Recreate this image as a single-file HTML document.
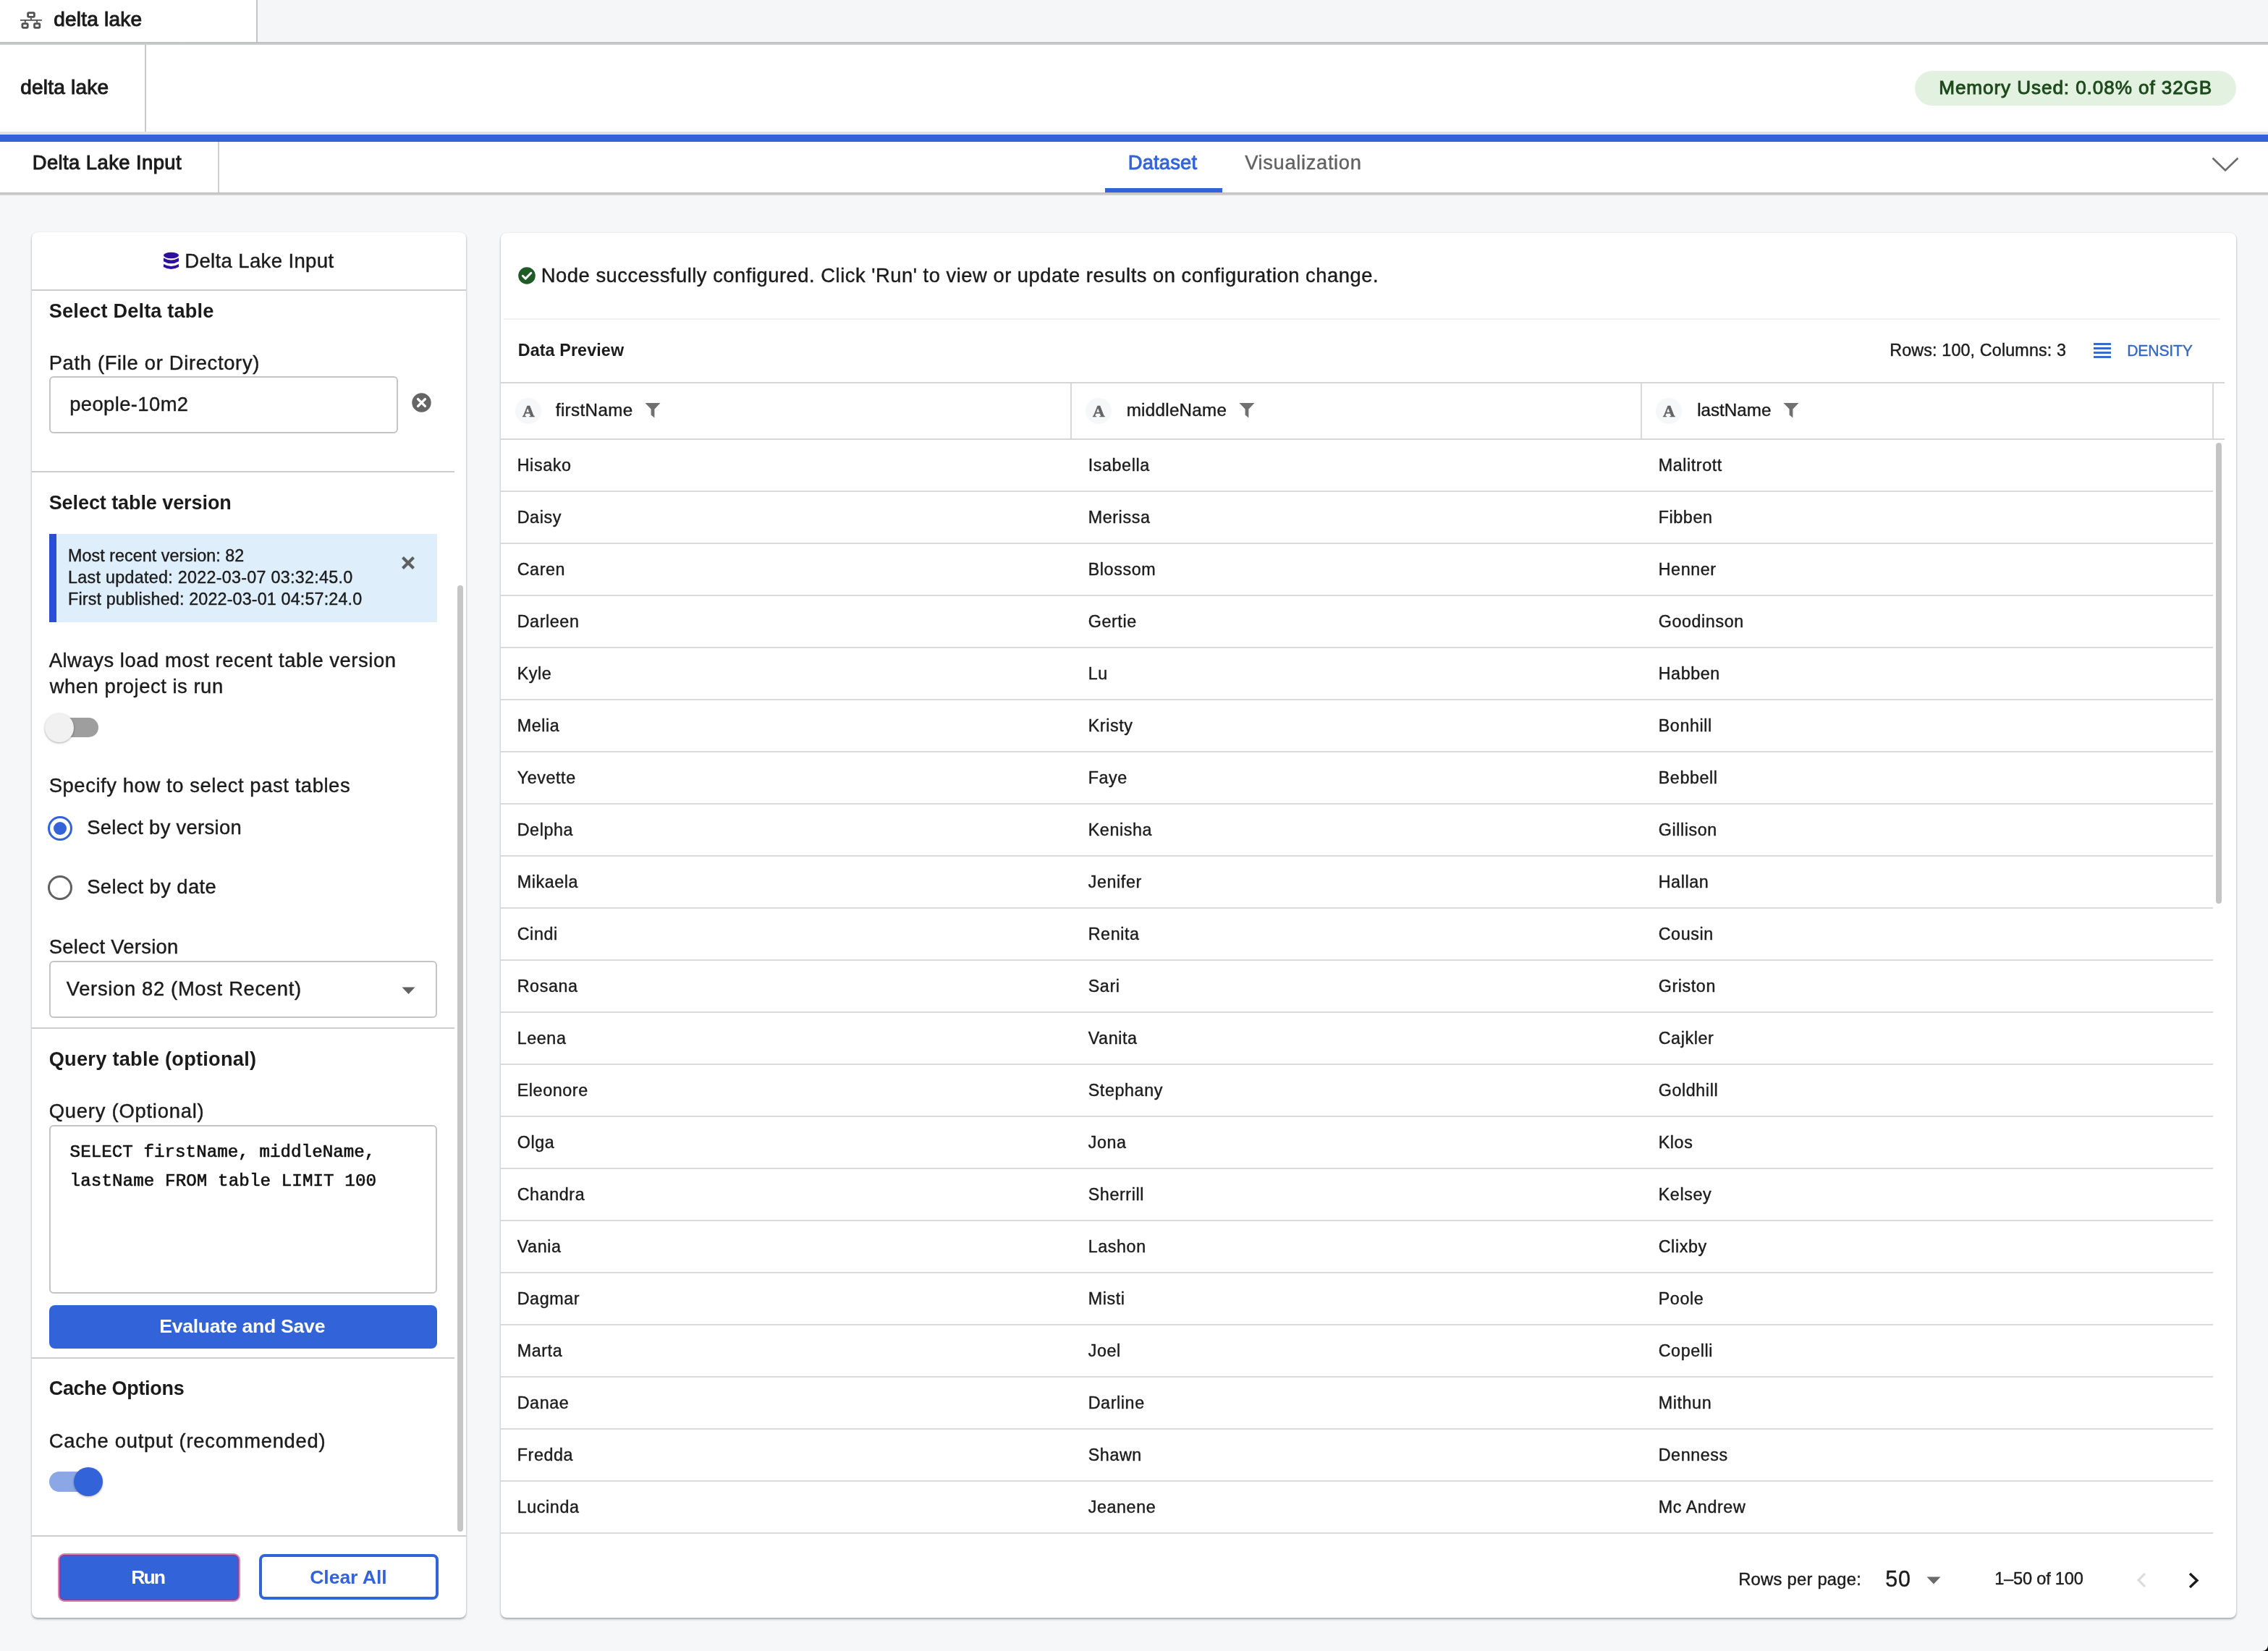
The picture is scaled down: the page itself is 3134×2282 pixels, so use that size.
<!DOCTYPE html>
<html><head><meta charset="utf-8"><title>delta lake</title>
<style>
html,body{margin:0;padding:0}
body{width:3134px;height:2282px;position:relative;overflow:hidden;background:#f6f7f9;font-family:"Liberation Sans",sans-serif}
.t{position:absolute;white-space:nowrap;line-height:1}
</style></head><body>
<div style="position:absolute;left:0;top:0;width:3134px;height:2282px;will-change:transform">
<div style="position:absolute;left:0px;top:0px;width:3134px;height:58px;background:#f5f6f8"></div>
<div style="position:absolute;left:0px;top:0px;width:354px;height:58px;background:#fff"></div>
<div style="position:absolute;left:354px;top:0px;width:2px;height:58px;background:#c4c5c7"></div>
<div style="position:absolute;left:0px;top:58px;width:3134px;height:4px;background:linear-gradient(#b9babc,#d2d3d5)"></div>
<svg style="position:absolute;left:28px;top:16px" width="30" height="24" viewBox="0 0 30 24" fill="none" stroke="#545454" stroke-width="2.8">
<rect x="10.6" y="1.6" width="8.8" height="5.7" rx="1.3"/>
<rect x="2.9" y="16.6" width="7.3" height="5.8" rx="1.3"/>
<rect x="19.5" y="16.6" width="7.3" height="5.8" rx="1.3"/>
<path d="M14.9 8.5V11.5M0 11.9H30M6.8 11.9V15.2M23.1 11.9V15.2" stroke-width="1.9"/>
</svg>
<div class="t" style="left:74.2px;top:13.3px;font-size:28px;font-family:'Liberation Sans', sans-serif;font-weight:normal;color:#1b1b1b;letter-spacing:0.22px;-webkit-text-stroke:1.0px #1b1b1b">delta lake</div>
<div style="position:absolute;left:0px;top:62px;width:3134px;height:120px;background:#fff"></div>
<div style="position:absolute;left:200px;top:62px;width:2px;height:120px;background:#c9c9c9"></div>
<div class="t" style="left:28.2px;top:106.8px;font-size:28px;font-family:'Liberation Sans', sans-serif;font-weight:normal;color:#1b1b1b;letter-spacing:0.22px;-webkit-text-stroke:1.0px #1b1b1b">delta lake</div>
<div style="position:absolute;left:2646px;top:98px;width:444px;height:48px;background:#e3f1e1;border-radius:24px"></div>
<div class="t" style="left:2679.2px;top:108.4px;font-size:26.2px;font-family:'Liberation Sans', sans-serif;font-weight:normal;color:#1d4a1c;letter-spacing:0.88px;-webkit-text-stroke:0.9px #1d4a1c">Memory Used: 0.08% of 32GB</div>
<div style="position:absolute;left:0px;top:182px;width:3134px;height:4px;background:#e2e2e2"></div>
<div style="position:absolute;left:0px;top:186px;width:3134px;height:10px;background:#3363d8"></div>
<div style="position:absolute;left:0px;top:196px;width:3134px;height:70px;background:#fff"></div>
<div style="position:absolute;left:301px;top:196px;width:2px;height:70px;background:#cfcfcf"></div>
<div class="t" style="left:44.7px;top:211.4px;font-size:27.4px;font-family:'Liberation Sans', sans-serif;font-weight:normal;color:#1b1b1b;letter-spacing:0.43px;-webkit-text-stroke:1.0px #1b1b1b">Delta Lake Input</div>
<div class="t" style="left:1558.8px;top:211.4px;font-size:27.4px;font-family:'Liberation Sans', sans-serif;font-weight:normal;color:#3363d8;letter-spacing:0.15px;-webkit-text-stroke:0.9px #3363d8">Dataset</div>
<div class="t" style="left:1720.2px;top:211.4px;font-size:27.4px;font-family:'Liberation Sans', sans-serif;font-weight:normal;color:#626262;letter-spacing:0.62px;-webkit-text-stroke:0.4px #626262">Visualization</div>
<div style="position:absolute;left:1527px;top:260px;width:162px;height:6px;background:#3363d8"></div>
<svg style="position:absolute;left:3056px;top:216px" width="38" height="22" viewBox="0 0 38 22"><path d="M1.5 2.5L19 19.5L36.5 2.5" fill="none" stroke="#6b6b6b" stroke-width="2.6"/></svg>
<div style="position:absolute;left:0px;top:266px;width:3134px;height:4px;background:linear-gradient(#bdbdbd,#d6d6d6)"></div>
<div style="position:absolute;left:0px;top:270px;width:3134px;height:2012px;background:#f6f7f9"></div>
<div style="position:absolute;left:44px;top:321px;width:600px;height:1915px;background:#fff;border-radius:8px;box-shadow:0 2px 3px rgba(0,0,0,0.32),0 0 2px rgba(0,0,0,0.10)"></div>
<svg style="position:absolute;left:225px;top:348px" width="23" height="26" viewBox="0 0 23 26">
<ellipse cx="11.5" cy="5" rx="10.5" ry="4.2" fill="#2e0fa0"/>
<path d="M1 8.6 Q11.5 14.5 22 8.6 V13.2 Q11.5 19.4 1 13.2Z" fill="#2e0fa0"/>
<path d="M1 17.1 Q11.5 23 22 17.1 V21 Q11.5 27 1 21Z" fill="#2e0fa0"/>
</svg>
<div class="t" style="left:255.2px;top:346.6px;font-size:27.6px;font-family:'Liberation Sans', sans-serif;font-weight:normal;color:#1b1b1b;letter-spacing:0.33px;-webkit-text-stroke:0.4px #1b1b1b;">Delta Lake Input</div>
<div style="position:absolute;left:44px;top:400px;width:600px;height:2px;background:#cbcbcb"></div>
<div class="t" style="left:67.7px;top:415.8px;font-size:27.2px;font-family:'Liberation Sans', sans-serif;font-weight:bold;color:#1b1b1b;letter-spacing:0.15px;">Select Delta table</div>
<div class="t" style="left:67.7px;top:487.5px;font-size:27.4px;font-family:'Liberation Sans', sans-serif;font-weight:normal;color:#1b1b1b;letter-spacing:0.66px;-webkit-text-stroke:0.4px #1b1b1b;">Path (File or Directory)</div>
<div style="position:absolute;left:68px;top:520px;width:482px;height:79px;background:#fff;border:2px solid #c4c4c4;border-radius:6px;box-sizing:border-box"></div>
<div class="t" style="left:96.2px;top:544.8px;font-size:27.4px;font-family:'Liberation Sans', sans-serif;font-weight:normal;color:#1b1b1b;letter-spacing:0.40px;-webkit-text-stroke:0.4px #1b1b1b;">people-10m2</div>
<svg style="position:absolute;left:569px;top:543px" width="27" height="27" viewBox="0 0 27 27">
<circle cx="13.5" cy="13.5" r="13.2" fill="#656565"/>
<path d="M8.6 8.6L18.4 18.4M18.4 8.6L8.6 18.4" stroke="#fff" stroke-width="3.4" stroke-linecap="round"/>
</svg>
<div style="position:absolute;left:44px;top:651px;width:584px;height:2px;background:#cdcdcd"></div>
<div class="t" style="left:67.7px;top:682.1px;font-size:27px;font-family:'Liberation Sans', sans-serif;font-weight:bold;color:#1b1b1b;letter-spacing:-0.08px;">Select table version</div>
<div style="position:absolute;left:68px;top:738px;width:536px;height:122px;background:#dfeefb"></div>
<div style="position:absolute;left:68px;top:738px;width:10px;height:122px;background:#2a4fd4"></div>
<div class="t" style="left:94.0px;top:756.8px;font-size:23.3px;font-family:'Liberation Sans', sans-serif;font-weight:normal;color:#1b1b1b;letter-spacing:0.05px;-webkit-text-stroke:0.4px #1b1b1b;">Most recent version: 82</div>
<div class="t" style="left:94.0px;top:786.5px;font-size:23.3px;font-family:'Liberation Sans', sans-serif;font-weight:normal;color:#1b1b1b;letter-spacing:0.29px;-webkit-text-stroke:0.4px #1b1b1b;">Last updated: 2022-03-07 03:32:45.0</div>
<div class="t" style="left:94.0px;top:817.0px;font-size:23.3px;font-family:'Liberation Sans', sans-serif;font-weight:normal;color:#1b1b1b;letter-spacing:0.16px;-webkit-text-stroke:0.4px #1b1b1b;">First published: 2022-03-01 04:57:24.0</div>
<svg style="position:absolute;left:554px;top:768px" width="20" height="20" viewBox="0 0 20 20">
<path d="M2.5 2.5L17.5 17.5M17.5 2.5L2.5 17.5" stroke="#5f5f5f" stroke-width="4.2"/>
</svg>
<div class="t" style="left:67.7px;top:899.3px;font-size:27.4px;font-family:'Liberation Sans', sans-serif;font-weight:normal;color:#1b1b1b;letter-spacing:0.54px;-webkit-text-stroke:0.4px #1b1b1b;">Always load most recent table version</div>
<div class="t" style="left:68.7px;top:935.4px;font-size:27.4px;font-family:'Liberation Sans', sans-serif;font-weight:normal;color:#1b1b1b;letter-spacing:0.53px;-webkit-text-stroke:0.4px #1b1b1b;">when project is run</div>
<div style="position:absolute;left:65px;top:992px;width:71px;height:27px;background:#9e9e9e;border-radius:14px"></div>
<div style="position:absolute;left:62px;top:986px;width:40px;height:40px;background:#f1f1f1;border-radius:50%;box-shadow:0 1px 3px rgba(0,0,0,0.35)"></div>
<div class="t" style="left:67.7px;top:1071.6px;font-size:27.4px;font-family:'Liberation Sans', sans-serif;font-weight:normal;color:#1b1b1b;letter-spacing:0.58px;-webkit-text-stroke:0.4px #1b1b1b;">Specify how to select past tables</div>
<div style="position:absolute;left:66px;top:1128px;width:34px;height:34px;border:3.8px solid #3363d8;border-radius:50%;box-sizing:border-box"></div>
<div style="position:absolute;left:74px;top:1136px;width:18px;height:18px;background:#3363d8;border-radius:50%"></div>
<div class="t" style="left:120.2px;top:1130.2px;font-size:27.4px;font-family:'Liberation Sans', sans-serif;font-weight:normal;color:#1b1b1b;letter-spacing:0.31px;-webkit-text-stroke:0.4px #1b1b1b;">Select by version</div>
<div style="position:absolute;left:66px;top:1210px;width:34px;height:34px;border:3.7px solid #616161;border-radius:50%;box-sizing:border-box"></div>
<div class="t" style="left:120.2px;top:1212.3px;font-size:27.4px;font-family:'Liberation Sans', sans-serif;font-weight:normal;color:#1b1b1b;letter-spacing:0.38px;-webkit-text-stroke:0.4px #1b1b1b;">Select by date</div>
<div class="t" style="left:67.7px;top:1295.3px;font-size:27.4px;font-family:'Liberation Sans', sans-serif;font-weight:normal;color:#1b1b1b;letter-spacing:0.27px;-webkit-text-stroke:0.4px #1b1b1b;">Select Version</div>
<div style="position:absolute;left:68px;top:1328px;width:536px;height:79px;background:#fff;border:2px solid #c4c4c4;border-radius:6px;box-sizing:border-box"></div>
<div class="t" style="left:91.8px;top:1352.8px;font-size:27.4px;font-family:'Liberation Sans', sans-serif;font-weight:normal;color:#1b1b1b;letter-spacing:0.66px;-webkit-text-stroke:0.4px #1b1b1b;">Version 82 (Most Recent)</div>
<svg style="position:absolute;left:555px;top:1364px" width="19" height="11" viewBox="0 0 19 11"><path d="M0.5 0.5H18.5L9.5 10Z" fill="#616161"/></svg>
<div style="position:absolute;left:44px;top:1420px;width:584px;height:2px;background:#cdcdcd"></div>
<div class="t" style="left:67.7px;top:1450.0px;font-size:27.2px;font-family:'Liberation Sans', sans-serif;font-weight:bold;color:#1b1b1b;letter-spacing:0.26px;">Query table (optional)</div>
<div class="t" style="left:67.7px;top:1521.8px;font-size:27.4px;font-family:'Liberation Sans', sans-serif;font-weight:normal;color:#1b1b1b;letter-spacing:0.77px;-webkit-text-stroke:0.4px #1b1b1b;">Query (Optional)</div>
<div style="position:absolute;left:68px;top:1555px;width:536px;height:233px;background:#fff;border:2px solid #c4c4c4;border-radius:6px;box-sizing:border-box"></div>
<div class="t" style="left:96.6px;top:1581.1px;font-size:24.2px;font-family:'Liberation Mono', monospace;font-weight:normal;color:#111;letter-spacing:0.03px;-webkit-text-stroke:0.6px #111">SELECT firstName, middleName,</div>
<div class="t" style="left:96.6px;top:1621.2px;font-size:24.2px;font-family:'Liberation Mono', monospace;font-weight:normal;color:#111;letter-spacing:0.09px;-webkit-text-stroke:0.6px #111">lastName FROM table LIMIT 100</div>
<div style="position:absolute;left:68px;top:1804px;width:536px;height:60px;background:#3363d8;border-radius:8px"></div>
<div class="t" style="left:220.2px;top:1820.1px;font-size:26.6px;font-family:'Liberation Sans', sans-serif;font-weight:bold;color:#fff;letter-spacing:-0.27px;">Evaluate and Save</div>
<div style="position:absolute;left:44px;top:1876px;width:584px;height:2px;background:#cdcdcd"></div>
<div class="t" style="left:67.7px;top:1905.9px;font-size:27px;font-family:'Liberation Sans', sans-serif;font-weight:bold;color:#1b1b1b;letter-spacing:-0.29px;">Cache Options</div>
<div class="t" style="left:67.7px;top:1977.5px;font-size:27.4px;font-family:'Liberation Sans', sans-serif;font-weight:normal;color:#1b1b1b;letter-spacing:0.72px;-webkit-text-stroke:0.4px #1b1b1b;">Cache output (recommended)</div>
<div style="position:absolute;left:68px;top:2034px;width:56px;height:28px;background:#8ca7e6;border-radius:14px"></div>
<div style="position:absolute;left:102px;top:2028px;width:40px;height:40px;background:#3363d8;border-radius:50%;box-shadow:0 1px 3px rgba(0,0,0,0.3)"></div>
<div style="position:absolute;left:632px;top:809px;width:8px;height:1308px;background:#c6c6c6;border-radius:4px"></div>
<div style="position:absolute;left:44px;top:2122px;width:600px;height:2px;background:#cdcdcd"></div>
<div style="position:absolute;left:80px;top:2147px;width:252px;height:67px;background:#3363d8;border:2.5px solid #df80b3;box-shadow:inset 0 0 0 1.5px #8d3c98;border-radius:9px;box-sizing:border-box"></div>
<div class="t" style="left:181.2px;top:2166.5px;font-size:26.6px;font-family:'Liberation Sans', sans-serif;font-weight:bold;color:#fff;letter-spacing:-2.00px;">Run</div>
<div style="position:absolute;left:358px;top:2148px;width:248px;height:63px;background:#fff;border:4px solid #3363d8;border-radius:8px;box-sizing:border-box"></div>
<div class="t" style="left:428.2px;top:2166.5px;font-size:26.6px;font-family:'Liberation Sans', sans-serif;font-weight:bold;color:#3363d8;letter-spacing:-0.06px;">Clear All</div>
<div style="position:absolute;left:692px;top:322px;width:2398px;height:1914px;background:#fff;border-radius:8px;box-shadow:0 2px 3px rgba(0,0,0,0.32),0 0 2px rgba(0,0,0,0.10)"></div>
<svg style="position:absolute;left:716px;top:369px" width="24" height="24" viewBox="0 0 24 24">
<circle cx="12" cy="12" r="11.8" fill="#1f5a27"/>
<path d="M6.3 12.3L10.2 16.1L17.8 8.3" fill="none" stroke="#fff" stroke-width="3" stroke-linecap="round" stroke-linejoin="round"/>
</svg>
<div class="t" style="left:747.8px;top:367.2px;font-size:27.4px;font-family:'Liberation Sans', sans-serif;font-weight:normal;color:#1b1b1b;letter-spacing:0.50px;-webkit-text-stroke:0.4px #1b1b1b;">Node successfully configured. Click 'Run' to view or update results on configuration change.</div>
<div style="position:absolute;left:696px;top:440px;width:2372px;height:2px;background:#f2f2f2"></div>
<div class="t" style="left:715.7px;top:472.6px;font-size:23.3px;font-family:'Liberation Sans', sans-serif;font-weight:bold;color:#1b1b1b;letter-spacing:0.12px;">Data Preview</div>
<div class="t" style="left:2611.2px;top:472.9px;font-size:23.3px;font-family:'Liberation Sans', sans-serif;font-weight:normal;color:#1b1b1b;letter-spacing:0.15px;-webkit-text-stroke:0.4px #1b1b1b;">Rows: 100, Columns: 3</div>
<div style="position:absolute;left:2893px;top:474px;width:24px;height:3.2px;background:#3a6bc9"></div>
<div style="position:absolute;left:2893px;top:480px;width:24px;height:3.2px;background:#3a6bc9"></div>
<div style="position:absolute;left:2893px;top:486px;width:24px;height:3.2px;background:#3a6bc9"></div>
<div style="position:absolute;left:2893px;top:492px;width:24px;height:3.2px;background:#3a6bc9"></div>
<div class="t" style="left:2939.2px;top:474.0px;font-size:21.2px;font-family:'Liberation Sans', sans-serif;font-weight:normal;color:#3568c5;letter-spacing:-0.17px;-webkit-text-stroke:0.4px #3568c5;">DENSITY</div>
<div style="position:absolute;left:692px;top:528px;width:2382px;height:2px;background:#d6d6d6"></div>
<div style="position:absolute;left:692px;top:606px;width:2382px;height:2px;background:#d6d6d6"></div>
<div style="position:absolute;left:1479px;top:530px;width:2px;height:76px;background:#d9d9d9"></div>
<div style="position:absolute;left:2267px;top:530px;width:2px;height:76px;background:#d9d9d9"></div>
<div style="position:absolute;left:3057px;top:530px;width:2px;height:76px;background:#d9d9d9"></div>
<div style="position:absolute;left:712px;top:550px;width:36px;height:36px;background:#f6f7f8;border-radius:50%"></div>
<div class="t" style="left:722.0px;top:556.6px;font-size:23px;font-family:'Liberation Serif', serif;font-weight:bold;color:#646464;-webkit-text-stroke:0.6px #646464">A</div>
<div class="t" style="left:767.8px;top:554.8px;font-size:24.2px;font-family:'Liberation Sans', sans-serif;font-weight:normal;color:#1b1b1b;letter-spacing:0.36px;-webkit-text-stroke:0.4px #1b1b1b;">firstName</div>
<svg style="position:absolute;left:890.7px;top:556px" width="22" height="22" viewBox="0 0 22 22"><path d="M0.5 1H21.5L13.4 9.6V21.5L8.6 17.5V9.6Z" fill="#707070"/></svg>
<div style="position:absolute;left:1500px;top:550px;width:36px;height:36px;background:#f6f7f8;border-radius:50%"></div>
<div class="t" style="left:1510.0px;top:556.6px;font-size:23px;font-family:'Liberation Serif', serif;font-weight:bold;color:#646464;-webkit-text-stroke:0.6px #646464">A</div>
<div class="t" style="left:1556.7px;top:554.8px;font-size:24.2px;font-family:'Liberation Sans', sans-serif;font-weight:normal;color:#1b1b1b;letter-spacing:0.28px;-webkit-text-stroke:0.4px #1b1b1b;">middleName</div>
<svg style="position:absolute;left:1712px;top:556px" width="22" height="22" viewBox="0 0 22 22"><path d="M0.5 1H21.5L13.4 9.6V21.5L8.6 17.5V9.6Z" fill="#707070"/></svg>
<div style="position:absolute;left:2288px;top:550px;width:36px;height:36px;background:#f6f7f8;border-radius:50%"></div>
<div class="t" style="left:2298.0px;top:556.6px;font-size:23px;font-family:'Liberation Serif', serif;font-weight:bold;color:#646464;-webkit-text-stroke:0.6px #646464">A</div>
<div class="t" style="left:2345.2px;top:554.8px;font-size:24.2px;font-family:'Liberation Sans', sans-serif;font-weight:normal;color:#1b1b1b;-webkit-text-stroke:0.4px #1b1b1b;">lastName</div>
<svg style="position:absolute;left:2463.7px;top:556px" width="22" height="22" viewBox="0 0 22 22"><path d="M0.5 1H21.5L13.4 9.6V21.5L8.6 17.5V9.6Z" fill="#707070"/></svg>
<div class="t" style="left:714.7px;top:631.7px;font-size:23.3px;font-family:'Liberation Sans', sans-serif;font-weight:normal;color:#1b1b1b;letter-spacing:0.60px;-webkit-text-stroke:0.4px #1b1b1b;">Hisako</div>
<div class="t" style="left:1503.7px;top:631.7px;font-size:23.3px;font-family:'Liberation Sans', sans-serif;font-weight:normal;color:#1b1b1b;letter-spacing:0.60px;-webkit-text-stroke:0.4px #1b1b1b;">Isabella</div>
<div class="t" style="left:2291.7px;top:631.7px;font-size:23.3px;font-family:'Liberation Sans', sans-serif;font-weight:normal;color:#1b1b1b;letter-spacing:0.60px;-webkit-text-stroke:0.4px #1b1b1b;">Malitrott</div>
<div style="position:absolute;left:692px;top:678px;width:2366px;height:2px;background:#dadada"></div>
<div class="t" style="left:714.7px;top:703.7px;font-size:23.3px;font-family:'Liberation Sans', sans-serif;font-weight:normal;color:#1b1b1b;letter-spacing:0.60px;-webkit-text-stroke:0.4px #1b1b1b;">Daisy</div>
<div class="t" style="left:1503.7px;top:703.7px;font-size:23.3px;font-family:'Liberation Sans', sans-serif;font-weight:normal;color:#1b1b1b;letter-spacing:0.60px;-webkit-text-stroke:0.4px #1b1b1b;">Merissa</div>
<div class="t" style="left:2291.7px;top:703.7px;font-size:23.3px;font-family:'Liberation Sans', sans-serif;font-weight:normal;color:#1b1b1b;letter-spacing:0.60px;-webkit-text-stroke:0.4px #1b1b1b;">Fibben</div>
<div style="position:absolute;left:692px;top:750px;width:2366px;height:2px;background:#dadada"></div>
<div class="t" style="left:714.7px;top:775.7px;font-size:23.3px;font-family:'Liberation Sans', sans-serif;font-weight:normal;color:#1b1b1b;letter-spacing:0.60px;-webkit-text-stroke:0.4px #1b1b1b;">Caren</div>
<div class="t" style="left:1503.7px;top:775.7px;font-size:23.3px;font-family:'Liberation Sans', sans-serif;font-weight:normal;color:#1b1b1b;letter-spacing:0.60px;-webkit-text-stroke:0.4px #1b1b1b;">Blossom</div>
<div class="t" style="left:2291.7px;top:775.7px;font-size:23.3px;font-family:'Liberation Sans', sans-serif;font-weight:normal;color:#1b1b1b;letter-spacing:0.60px;-webkit-text-stroke:0.4px #1b1b1b;">Henner</div>
<div style="position:absolute;left:692px;top:822px;width:2366px;height:2px;background:#dadada"></div>
<div class="t" style="left:714.7px;top:847.7px;font-size:23.3px;font-family:'Liberation Sans', sans-serif;font-weight:normal;color:#1b1b1b;letter-spacing:0.60px;-webkit-text-stroke:0.4px #1b1b1b;">Darleen</div>
<div class="t" style="left:1503.7px;top:847.7px;font-size:23.3px;font-family:'Liberation Sans', sans-serif;font-weight:normal;color:#1b1b1b;letter-spacing:0.60px;-webkit-text-stroke:0.4px #1b1b1b;">Gertie</div>
<div class="t" style="left:2291.7px;top:847.7px;font-size:23.3px;font-family:'Liberation Sans', sans-serif;font-weight:normal;color:#1b1b1b;letter-spacing:0.60px;-webkit-text-stroke:0.4px #1b1b1b;">Goodinson</div>
<div style="position:absolute;left:692px;top:894px;width:2366px;height:2px;background:#dadada"></div>
<div class="t" style="left:714.7px;top:919.7px;font-size:23.3px;font-family:'Liberation Sans', sans-serif;font-weight:normal;color:#1b1b1b;letter-spacing:0.60px;-webkit-text-stroke:0.4px #1b1b1b;">Kyle</div>
<div class="t" style="left:1503.7px;top:919.7px;font-size:23.3px;font-family:'Liberation Sans', sans-serif;font-weight:normal;color:#1b1b1b;letter-spacing:0.60px;-webkit-text-stroke:0.4px #1b1b1b;">Lu</div>
<div class="t" style="left:2291.7px;top:919.7px;font-size:23.3px;font-family:'Liberation Sans', sans-serif;font-weight:normal;color:#1b1b1b;letter-spacing:0.60px;-webkit-text-stroke:0.4px #1b1b1b;">Habben</div>
<div style="position:absolute;left:692px;top:966px;width:2366px;height:2px;background:#dadada"></div>
<div class="t" style="left:714.7px;top:991.7px;font-size:23.3px;font-family:'Liberation Sans', sans-serif;font-weight:normal;color:#1b1b1b;letter-spacing:0.60px;-webkit-text-stroke:0.4px #1b1b1b;">Melia</div>
<div class="t" style="left:1503.7px;top:991.7px;font-size:23.3px;font-family:'Liberation Sans', sans-serif;font-weight:normal;color:#1b1b1b;letter-spacing:0.60px;-webkit-text-stroke:0.4px #1b1b1b;">Kristy</div>
<div class="t" style="left:2291.7px;top:991.7px;font-size:23.3px;font-family:'Liberation Sans', sans-serif;font-weight:normal;color:#1b1b1b;letter-spacing:0.60px;-webkit-text-stroke:0.4px #1b1b1b;">Bonhill</div>
<div style="position:absolute;left:692px;top:1038px;width:2366px;height:2px;background:#dadada"></div>
<div class="t" style="left:714.7px;top:1063.7px;font-size:23.3px;font-family:'Liberation Sans', sans-serif;font-weight:normal;color:#1b1b1b;letter-spacing:0.60px;-webkit-text-stroke:0.4px #1b1b1b;">Yevette</div>
<div class="t" style="left:1503.7px;top:1063.7px;font-size:23.3px;font-family:'Liberation Sans', sans-serif;font-weight:normal;color:#1b1b1b;letter-spacing:0.60px;-webkit-text-stroke:0.4px #1b1b1b;">Faye</div>
<div class="t" style="left:2291.7px;top:1063.7px;font-size:23.3px;font-family:'Liberation Sans', sans-serif;font-weight:normal;color:#1b1b1b;letter-spacing:0.60px;-webkit-text-stroke:0.4px #1b1b1b;">Bebbell</div>
<div style="position:absolute;left:692px;top:1110px;width:2366px;height:2px;background:#dadada"></div>
<div class="t" style="left:714.7px;top:1135.7px;font-size:23.3px;font-family:'Liberation Sans', sans-serif;font-weight:normal;color:#1b1b1b;letter-spacing:0.60px;-webkit-text-stroke:0.4px #1b1b1b;">Delpha</div>
<div class="t" style="left:1503.7px;top:1135.7px;font-size:23.3px;font-family:'Liberation Sans', sans-serif;font-weight:normal;color:#1b1b1b;letter-spacing:0.60px;-webkit-text-stroke:0.4px #1b1b1b;">Kenisha</div>
<div class="t" style="left:2291.7px;top:1135.7px;font-size:23.3px;font-family:'Liberation Sans', sans-serif;font-weight:normal;color:#1b1b1b;letter-spacing:0.60px;-webkit-text-stroke:0.4px #1b1b1b;">Gillison</div>
<div style="position:absolute;left:692px;top:1182px;width:2366px;height:2px;background:#dadada"></div>
<div class="t" style="left:714.7px;top:1207.7px;font-size:23.3px;font-family:'Liberation Sans', sans-serif;font-weight:normal;color:#1b1b1b;letter-spacing:0.60px;-webkit-text-stroke:0.4px #1b1b1b;">Mikaela</div>
<div class="t" style="left:1503.7px;top:1207.7px;font-size:23.3px;font-family:'Liberation Sans', sans-serif;font-weight:normal;color:#1b1b1b;letter-spacing:0.60px;-webkit-text-stroke:0.4px #1b1b1b;">Jenifer</div>
<div class="t" style="left:2291.7px;top:1207.7px;font-size:23.3px;font-family:'Liberation Sans', sans-serif;font-weight:normal;color:#1b1b1b;letter-spacing:0.60px;-webkit-text-stroke:0.4px #1b1b1b;">Hallan</div>
<div style="position:absolute;left:692px;top:1254px;width:2366px;height:2px;background:#dadada"></div>
<div class="t" style="left:714.7px;top:1279.7px;font-size:23.3px;font-family:'Liberation Sans', sans-serif;font-weight:normal;color:#1b1b1b;letter-spacing:0.60px;-webkit-text-stroke:0.4px #1b1b1b;">Cindi</div>
<div class="t" style="left:1503.7px;top:1279.7px;font-size:23.3px;font-family:'Liberation Sans', sans-serif;font-weight:normal;color:#1b1b1b;letter-spacing:0.60px;-webkit-text-stroke:0.4px #1b1b1b;">Renita</div>
<div class="t" style="left:2291.7px;top:1279.7px;font-size:23.3px;font-family:'Liberation Sans', sans-serif;font-weight:normal;color:#1b1b1b;letter-spacing:0.60px;-webkit-text-stroke:0.4px #1b1b1b;">Cousin</div>
<div style="position:absolute;left:692px;top:1326px;width:2366px;height:2px;background:#dadada"></div>
<div class="t" style="left:714.7px;top:1351.7px;font-size:23.3px;font-family:'Liberation Sans', sans-serif;font-weight:normal;color:#1b1b1b;letter-spacing:0.60px;-webkit-text-stroke:0.4px #1b1b1b;">Rosana</div>
<div class="t" style="left:1503.7px;top:1351.7px;font-size:23.3px;font-family:'Liberation Sans', sans-serif;font-weight:normal;color:#1b1b1b;letter-spacing:0.60px;-webkit-text-stroke:0.4px #1b1b1b;">Sari</div>
<div class="t" style="left:2291.7px;top:1351.7px;font-size:23.3px;font-family:'Liberation Sans', sans-serif;font-weight:normal;color:#1b1b1b;letter-spacing:0.60px;-webkit-text-stroke:0.4px #1b1b1b;">Griston</div>
<div style="position:absolute;left:692px;top:1398px;width:2366px;height:2px;background:#dadada"></div>
<div class="t" style="left:714.7px;top:1423.7px;font-size:23.3px;font-family:'Liberation Sans', sans-serif;font-weight:normal;color:#1b1b1b;letter-spacing:0.60px;-webkit-text-stroke:0.4px #1b1b1b;">Leena</div>
<div class="t" style="left:1503.7px;top:1423.7px;font-size:23.3px;font-family:'Liberation Sans', sans-serif;font-weight:normal;color:#1b1b1b;letter-spacing:0.60px;-webkit-text-stroke:0.4px #1b1b1b;">Vanita</div>
<div class="t" style="left:2291.7px;top:1423.7px;font-size:23.3px;font-family:'Liberation Sans', sans-serif;font-weight:normal;color:#1b1b1b;letter-spacing:0.60px;-webkit-text-stroke:0.4px #1b1b1b;">Cajkler</div>
<div style="position:absolute;left:692px;top:1470px;width:2366px;height:2px;background:#dadada"></div>
<div class="t" style="left:714.7px;top:1495.7px;font-size:23.3px;font-family:'Liberation Sans', sans-serif;font-weight:normal;color:#1b1b1b;letter-spacing:0.60px;-webkit-text-stroke:0.4px #1b1b1b;">Eleonore</div>
<div class="t" style="left:1503.7px;top:1495.7px;font-size:23.3px;font-family:'Liberation Sans', sans-serif;font-weight:normal;color:#1b1b1b;letter-spacing:0.60px;-webkit-text-stroke:0.4px #1b1b1b;">Stephany</div>
<div class="t" style="left:2291.7px;top:1495.7px;font-size:23.3px;font-family:'Liberation Sans', sans-serif;font-weight:normal;color:#1b1b1b;letter-spacing:0.60px;-webkit-text-stroke:0.4px #1b1b1b;">Goldhill</div>
<div style="position:absolute;left:692px;top:1542px;width:2366px;height:2px;background:#dadada"></div>
<div class="t" style="left:714.7px;top:1567.7px;font-size:23.3px;font-family:'Liberation Sans', sans-serif;font-weight:normal;color:#1b1b1b;letter-spacing:0.60px;-webkit-text-stroke:0.4px #1b1b1b;">Olga</div>
<div class="t" style="left:1503.7px;top:1567.7px;font-size:23.3px;font-family:'Liberation Sans', sans-serif;font-weight:normal;color:#1b1b1b;letter-spacing:0.60px;-webkit-text-stroke:0.4px #1b1b1b;">Jona</div>
<div class="t" style="left:2291.7px;top:1567.7px;font-size:23.3px;font-family:'Liberation Sans', sans-serif;font-weight:normal;color:#1b1b1b;letter-spacing:0.60px;-webkit-text-stroke:0.4px #1b1b1b;">Klos</div>
<div style="position:absolute;left:692px;top:1614px;width:2366px;height:2px;background:#dadada"></div>
<div class="t" style="left:714.7px;top:1639.7px;font-size:23.3px;font-family:'Liberation Sans', sans-serif;font-weight:normal;color:#1b1b1b;letter-spacing:0.60px;-webkit-text-stroke:0.4px #1b1b1b;">Chandra</div>
<div class="t" style="left:1503.7px;top:1639.7px;font-size:23.3px;font-family:'Liberation Sans', sans-serif;font-weight:normal;color:#1b1b1b;letter-spacing:0.60px;-webkit-text-stroke:0.4px #1b1b1b;">Sherrill</div>
<div class="t" style="left:2291.7px;top:1639.7px;font-size:23.3px;font-family:'Liberation Sans', sans-serif;font-weight:normal;color:#1b1b1b;letter-spacing:0.60px;-webkit-text-stroke:0.4px #1b1b1b;">Kelsey</div>
<div style="position:absolute;left:692px;top:1686px;width:2366px;height:2px;background:#dadada"></div>
<div class="t" style="left:714.7px;top:1711.7px;font-size:23.3px;font-family:'Liberation Sans', sans-serif;font-weight:normal;color:#1b1b1b;letter-spacing:0.60px;-webkit-text-stroke:0.4px #1b1b1b;">Vania</div>
<div class="t" style="left:1503.7px;top:1711.7px;font-size:23.3px;font-family:'Liberation Sans', sans-serif;font-weight:normal;color:#1b1b1b;letter-spacing:0.60px;-webkit-text-stroke:0.4px #1b1b1b;">Lashon</div>
<div class="t" style="left:2291.7px;top:1711.7px;font-size:23.3px;font-family:'Liberation Sans', sans-serif;font-weight:normal;color:#1b1b1b;letter-spacing:0.60px;-webkit-text-stroke:0.4px #1b1b1b;">Clixby</div>
<div style="position:absolute;left:692px;top:1758px;width:2366px;height:2px;background:#dadada"></div>
<div class="t" style="left:714.7px;top:1783.7px;font-size:23.3px;font-family:'Liberation Sans', sans-serif;font-weight:normal;color:#1b1b1b;letter-spacing:0.60px;-webkit-text-stroke:0.4px #1b1b1b;">Dagmar</div>
<div class="t" style="left:1503.7px;top:1783.7px;font-size:23.3px;font-family:'Liberation Sans', sans-serif;font-weight:normal;color:#1b1b1b;letter-spacing:0.60px;-webkit-text-stroke:0.4px #1b1b1b;">Misti</div>
<div class="t" style="left:2291.7px;top:1783.7px;font-size:23.3px;font-family:'Liberation Sans', sans-serif;font-weight:normal;color:#1b1b1b;letter-spacing:0.60px;-webkit-text-stroke:0.4px #1b1b1b;">Poole</div>
<div style="position:absolute;left:692px;top:1830px;width:2366px;height:2px;background:#dadada"></div>
<div class="t" style="left:714.7px;top:1855.7px;font-size:23.3px;font-family:'Liberation Sans', sans-serif;font-weight:normal;color:#1b1b1b;letter-spacing:0.60px;-webkit-text-stroke:0.4px #1b1b1b;">Marta</div>
<div class="t" style="left:1503.7px;top:1855.7px;font-size:23.3px;font-family:'Liberation Sans', sans-serif;font-weight:normal;color:#1b1b1b;letter-spacing:0.60px;-webkit-text-stroke:0.4px #1b1b1b;">Joel</div>
<div class="t" style="left:2291.7px;top:1855.7px;font-size:23.3px;font-family:'Liberation Sans', sans-serif;font-weight:normal;color:#1b1b1b;letter-spacing:0.60px;-webkit-text-stroke:0.4px #1b1b1b;">Copelli</div>
<div style="position:absolute;left:692px;top:1902px;width:2366px;height:2px;background:#dadada"></div>
<div class="t" style="left:714.7px;top:1927.7px;font-size:23.3px;font-family:'Liberation Sans', sans-serif;font-weight:normal;color:#1b1b1b;letter-spacing:0.60px;-webkit-text-stroke:0.4px #1b1b1b;">Danae</div>
<div class="t" style="left:1503.7px;top:1927.7px;font-size:23.3px;font-family:'Liberation Sans', sans-serif;font-weight:normal;color:#1b1b1b;letter-spacing:0.60px;-webkit-text-stroke:0.4px #1b1b1b;">Darline</div>
<div class="t" style="left:2291.7px;top:1927.7px;font-size:23.3px;font-family:'Liberation Sans', sans-serif;font-weight:normal;color:#1b1b1b;letter-spacing:0.60px;-webkit-text-stroke:0.4px #1b1b1b;">Mithun</div>
<div style="position:absolute;left:692px;top:1974px;width:2366px;height:2px;background:#dadada"></div>
<div class="t" style="left:714.7px;top:1999.7px;font-size:23.3px;font-family:'Liberation Sans', sans-serif;font-weight:normal;color:#1b1b1b;letter-spacing:0.60px;-webkit-text-stroke:0.4px #1b1b1b;">Fredda</div>
<div class="t" style="left:1503.7px;top:1999.7px;font-size:23.3px;font-family:'Liberation Sans', sans-serif;font-weight:normal;color:#1b1b1b;letter-spacing:0.60px;-webkit-text-stroke:0.4px #1b1b1b;">Shawn</div>
<div class="t" style="left:2291.7px;top:1999.7px;font-size:23.3px;font-family:'Liberation Sans', sans-serif;font-weight:normal;color:#1b1b1b;letter-spacing:0.60px;-webkit-text-stroke:0.4px #1b1b1b;">Denness</div>
<div style="position:absolute;left:692px;top:2046px;width:2366px;height:2px;background:#dadada"></div>
<div class="t" style="left:714.7px;top:2071.7px;font-size:23.3px;font-family:'Liberation Sans', sans-serif;font-weight:normal;color:#1b1b1b;letter-spacing:0.60px;-webkit-text-stroke:0.4px #1b1b1b;">Lucinda</div>
<div class="t" style="left:1503.7px;top:2071.7px;font-size:23.3px;font-family:'Liberation Sans', sans-serif;font-weight:normal;color:#1b1b1b;letter-spacing:0.60px;-webkit-text-stroke:0.4px #1b1b1b;">Jeanene</div>
<div class="t" style="left:2291.7px;top:2071.7px;font-size:23.3px;font-family:'Liberation Sans', sans-serif;font-weight:normal;color:#1b1b1b;letter-spacing:0.60px;-webkit-text-stroke:0.4px #1b1b1b;">Mc Andrew</div>
<div style="position:absolute;left:692px;top:2118px;width:2366px;height:2px;background:#dadada"></div>
<div style="position:absolute;left:3062px;top:612px;width:8px;height:637px;background:#c4c4c4;border-radius:4px"></div>
<div class="t" style="left:2402.2px;top:2171.2px;font-size:23.8px;font-family:'Liberation Sans', sans-serif;font-weight:normal;color:#1b1b1b;letter-spacing:0.23px;-webkit-text-stroke:0.4px #1b1b1b;">Rows per page:</div>
<div class="t" style="left:2605.2px;top:2167.2px;font-size:30.5px;font-family:'Liberation Sans', sans-serif;font-weight:normal;color:#1b1b1b;letter-spacing:0.80px;-webkit-text-stroke:0.4px #1b1b1b;">50</div>
<svg style="position:absolute;left:2662px;top:2179px" width="20" height="11" viewBox="0 0 20 11"><path d="M0.5 0.5H19.5L10 10.5Z" fill="#6b6b6b"/></svg>
<div class="t" style="left:2756.2px;top:2171.4px;font-size:23.6px;font-family:'Liberation Sans', sans-serif;font-weight:normal;color:#1b1b1b;letter-spacing:-0.20px;-webkit-text-stroke:0.4px #1b1b1b;">1–50 of 100</div>
<svg style="position:absolute;left:2950px;top:2173px" width="18" height="22" viewBox="0 0 18 22"><path d="M14 2L5 11L14 20" fill="none" stroke="#dadada" stroke-width="3"/></svg>
<svg style="position:absolute;left:3022px;top:2173px" width="20" height="22" viewBox="0 0 20 22"><path d="M4 2L14 11.5L4 21" fill="none" stroke="#1b1b1b" stroke-width="3.4"/></svg>
<svg style="position:absolute;left:3126px;top:2274px" width="8" height="8" viewBox="0 0 8 8"><path d="M8 0A8 8 0 0 1 0 8H8Z" fill="#111"/></svg>
</div></body></html>
